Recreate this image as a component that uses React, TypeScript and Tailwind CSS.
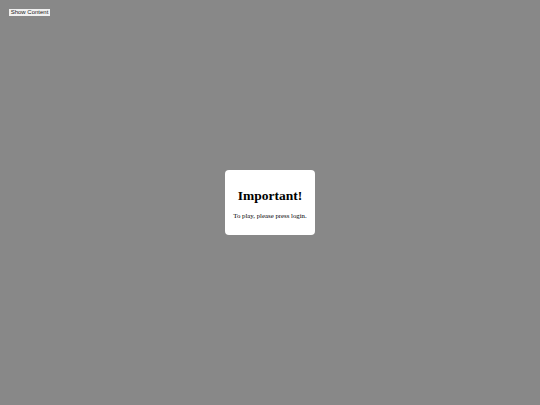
export default function App() {
  return (
    <div className="relative w-full h-[405px] bg-[#888888]" style={{ fontFamily: '"Liberation Serif", serif' }}>
      <div className="pt-[9px] pl-[9px]">
        <button className="block bg-[#f0f0f0] text-[#222] text-[6px] leading-[7px] w-[41px] text-center" style={{ fontFamily: '"Liberation Sans", Arial, sans-serif' }}>
          Show Content
        </button>
      </div>
      <div className="absolute left-[225px] top-[170px] w-[90px] h-[65px] bg-white rounded-[4px] flex flex-col items-center">
        <h1 className="mt-[18px] text-[13.5px] leading-[16px] font-bold text-black">Important!</h1>
        <p className="mt-[7px] text-[6.8px] leading-[9px] text-black">To play, please press login.</p>
      </div>
    </div>
  );
}
